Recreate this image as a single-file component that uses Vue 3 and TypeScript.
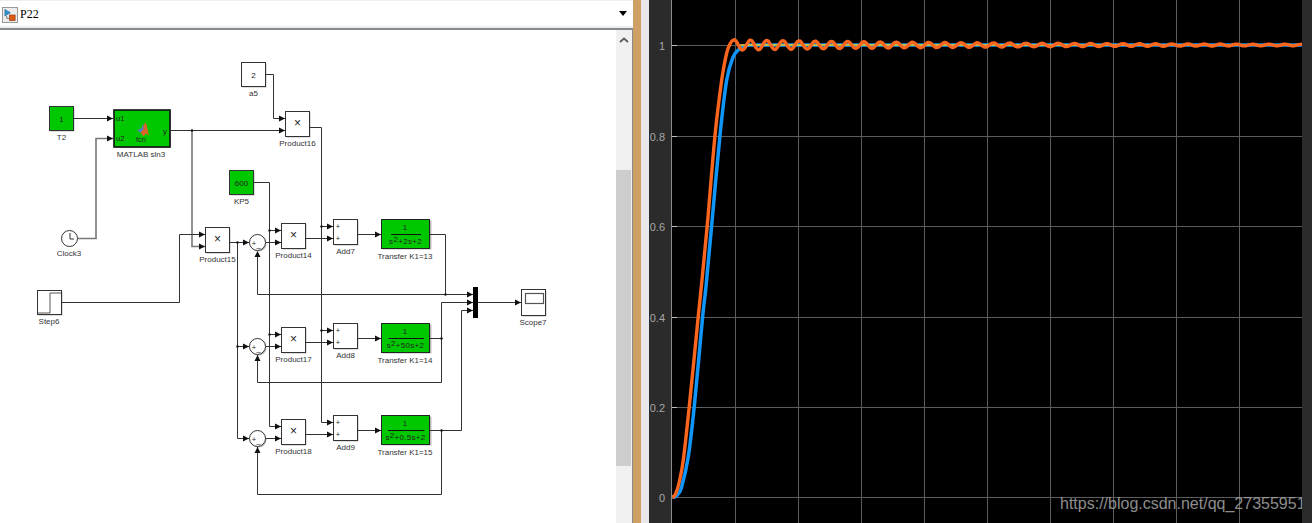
<script setup lang="ts">
type Pt = [number, number]
type Block = { x: number; y: number; w: number; h: number; green?: boolean; text?: string; label: string }

const plainBlocks: Block[] = [
  { x: 49.5, y: 106.5, w: 24, h: 24, green: true, text: '1', label: 'T2' },
  { x: 241.5, y: 62.5, w: 24, h: 24, text: '2', label: 'a5' },
  { x: 229.5, y: 170.5, w: 24, h: 24, green: true, text: '600', label: 'KP5' },
  { x: 285.5, y: 111.5, w: 24, h: 25, text: '×', label: 'Product16' },
  { x: 205.5, y: 227.5, w: 24, h: 25, text: '×', label: 'Product15' },
  { x: 281.5, y: 223.5, w: 24, h: 25, text: '×', label: 'Product14' },
  { x: 281.5, y: 327.5, w: 24, h: 25, text: '×', label: 'Product17' },
  { x: 281.5, y: 419.5, w: 24, h: 25, text: '×', label: 'Product18' },
  { x: 333.5, y: 219.5, w: 24, h: 25, label: 'Add7' },
  { x: 333.5, y: 323.5, w: 24, h: 25, label: 'Add8' },
  { x: 333.5, y: 415.5, w: 24, h: 25, label: 'Add9' },
]

const transfers = [
  { y: 219.5, den: '+2s+2', x1: 391, x2: 421, label: 'Transfer K1=13' },
  { y: 323.5, den: '+50s+2', x1: 388.5, x2: 424, label: 'Transfer K1=14' },
  { y: 415.5, den: '+0.5s+2', x1: 388, x2: 424.5, label: 'Transfer K1=15' },
]

const sums = [242.5, 346.5, 438.5]

const wires = [
  'M74 118.5H113',
  'M170 130.5H285',
  'M266 74.5H273.5V118.5H285',
  'M62 302.5H179.5V234.5H205',
  'M230 242.5H249',
  'M237.5 242.5V438.5H249',
  'M237.5 346.5H249',
  'M266 242.5H281',
  'M266 346.5H281',
  'M266 438.5H281',
  'M254 182.5H269.5V426.5H281',
  'M269.5 230.5H281',
  'M269.5 334.5H281',
  'M310 127.5H321.5V422.5H333',
  'M321.5 226.5H333',
  'M321.5 330.5H333',
  'M306 238.5H333',
  'M306 342.5H333',
  'M306 434.5H333',
  'M358 234.5H381',
  'M358 338.5H381',
  'M358 430.5H381',
  'M430 234.5H445.5V294.5',
  'M257.5 257V294.5H473',
  'M430 338.5H441.5',
  'M441.5 382.5V302.5H473',
  'M441.5 382.5H257.5V355',
  'M430 430.5H461.5V310.5H473',
  'M441.5 430.5V494.5H257.5V447',
  'M478 302.5H521',
]

const softWires = ['M78 238.5H96V138.5H113', 'M192 130.5V246.5H205']

const dots: Pt[] = [
  [192, 130.5], [237.5, 242.5], [237.5, 346.5], [269.5, 230.5], [269.5, 334.5],
  [321.5, 226.5], [321.5, 330.5], [445.5, 294.5], [441.5, 338.5], [441.5, 430.5],
]

const arrowsRight: Pt[] = [
  [113, 118.5], [113, 138.5], [285, 118.5], [285, 130.5], [205, 234.5], [205, 246.5],
  [249, 242.5], [249, 346.5], [249, 438.5], [281, 230.5], [281, 242.5], [281, 334.5],
  [281, 346.5], [281, 426.5], [281, 438.5], [333, 226.5], [333, 238.5], [333, 330.5],
  [333, 342.5], [333, 422.5], [333, 434.5], [381, 234.5], [381, 338.5], [381, 430.5],
  [473, 294.5], [473, 302.5], [473, 310.5], [521, 302.5],
]
const arrowsUp: Pt[] = [[257.5, 251], [257.5, 355], [257.5, 447]]

const rightTriangle = ([x, y]: Pt) => `${x - 6},${y - 3} ${x},${y} ${x - 6},${y + 3}`
const upTriangle = ([x, y]: Pt) => `${x},${y} ${x + 3},${y + 6} ${x - 3},${y + 6}`

const vGrid = [735, 798, 861, 924, 987, 1050, 1113, 1176, 1239]
const hGrid = [
  { y: 45, t: '1' },
  { y: 136, t: '0.8' },
  { y: 226, t: '0.6' },
  { y: 317, t: '0.4' },
  { y: 407, t: '0.2' },
  { y: 497, t: '0' },
]

function smooth(points: Pt[]): string {
  let d = `M${points[0][0]} ${points[0][1]}`
  for (let i = 0; i < points.length - 1; i++) {
    const p0 = points[Math.max(i - 1, 0)]
    const p1 = points[i]
    const p2 = points[i + 1]
    const p3 = points[Math.min(i + 2, points.length - 1)]
    const c1x = p1[0] + (p2[0] - p0[0]) / 6
    const c1y = p1[1] + (p2[1] - p0[1]) / 6
    const c2x = p2[0] - (p3[0] - p1[0]) / 6
    const c2y = p2[1] - (p3[1] - p1[1]) / 6
    d += `C${c1x.toFixed(1)} ${c1y.toFixed(1)} ${c2x.toFixed(1)} ${c2y.toFixed(1)} ${p2[0].toFixed(1)} ${p2[1].toFixed(1)}`
  }
  return d
}

const ripple: Pt[] = []
for (let x = 734; x <= 1302; x += 2) {
  const amp = 5.2 * Math.exp(-(x - 734) / 288)
  ripple.push([x, 45 - amp * Math.cos((2 * Math.PI * (x - 734.3)) / 16.2)])
}

const orangePath = smooth([
  [672, 497], [673.5, 496.7], [676, 493], [679, 483], [683.3, 460], [689.3, 406], [698.3, 316],
  [701.5, 285], [707.3, 225], [715, 135.3], [721.7, 80], [726.7, 53], [730.5, 43], ...ripple,
])

const blueTail: Pt[] = [[760, 45], [800, 45], [1302, 45]]
const bluePath = smooth([
  [672, 497], [675, 497], [678, 494], [681.7, 486.7], [688.3, 456.7], [694.3, 406], [702.7, 316],
  [706, 286.7], [711.7, 225], [720, 135.3], [726.7, 80], [733.3, 56.7], [738.3, 50], [743.3, 46.3],
  [750, 45], ...blueTail,
])
</script>

<template>
  <div class="screen">
    <div class="editor">
      <div class="titlebar">
        <div class="model-icon">
          <svg width="14" height="14" viewBox="0 0 15 15">
            <path d="M2 1.5 8 5 2 8.5Z" fill="#2f8fd0" stroke="#1b5f90" stroke-width=".6" />
            <path d="M4 8.5V11H7" fill="none" stroke="#555" stroke-width=".8" />
            <rect x="7" y="7.5" width="6" height="6" fill="#e05a10" stroke="#8a3a10" stroke-width=".7" />
          </svg>
        </div>
        <span class="model-name">P22</span>
        <span class="dropdown"></span>
      </div>
      <div class="editor-body">
        <svg class="diagram" width="616" height="493" viewBox="0 30 616 493">
          <g v-for="b in plainBlocks" :key="b.label">
            <rect :x="b.x + 1" :y="b.y + 1" :width="b.w" :height="b.h" fill="#bbb" />
            <rect :x="b.x" :y="b.y" :width="b.w" :height="b.h" :fill="b.green ? '#00c800' : '#fff'" stroke="#333" />
            <text v-if="b.text" :x="b.x + b.w / 2" :y="b.y + b.h / 2 + 3" :class="['t', 'center', { times: b.text === '×' }]">{{ b.text }}</text>
            <text :x="b.x + b.w / 2" :y="b.y + b.h + 9" class="t center label">{{ b.label }}</text>
          </g>

          <!-- matlab function -->
          <rect x="115" y="110" width="56" height="38" fill="#bbb" />
          <rect x="114" y="110" width="56" height="37" fill="#00c800" stroke="#111" stroke-width="1.6" />
          <text x="116" y="121" class="t small">u1</text>
          <text x="116" y="141" class="t small">u2</text>
          <text x="163" y="134" class="t small">y</text>
          <text x="141" y="142" class="t center small">fcn</text>
          <path d="M137 130.5 141.5 128 146 122 149 135.5 146 133.5 143.5 136.5 140.5 132.5Z" fill="#d9642a" />
          <path d="M137 130.5 141.5 128 143 124 143.5 129 140.5 132.5Z" fill="#3f86c5" />
          <text x="141" y="157" class="t center label">MATLAB sln3</text>

          <!-- clock -->
          <circle cx="69.5" cy="238.5" r="8" fill="#fff" stroke="#333" />
          <path d="M70 233V239H74" fill="none" stroke="#333" />
          <text x="69" y="256" class="t center label">Clock3</text>

          <!-- step -->
          <rect x="38.5" y="291.5" width="24" height="24" fill="#bbb" />
          <rect x="37.5" y="290.5" width="24" height="24" fill="#fff" stroke="#333" />
          <path d="M38 313H50V293H61" fill="none" stroke="#555" />
          <text x="49" y="324" class="t center label">Step6</text>

          <!-- sums -->
          <g v-for="y in sums" :key="y">
            <circle :cx="258.5" :cy="y + 1" r="8" fill="#bbb" />
            <circle cx="257.5" :cy="y" r="8" fill="#fff" stroke="#333" />
            <text x="254" :y="y + 3" class="t center small">+</text>
            <text x="258.5" :y="y + 4" class="t center small">_</text>
          </g>

          <!-- add signs -->
          <g v-for="y in [226.5, 238.5, 330.5, 342.5, 422.5, 434.5]" :key="'p' + y">
            <text x="338" :y="y + 2.5" class="t center small">+</text>
          </g>

          <!-- transfer functions -->
          <g v-for="tf in transfers" :key="tf.label">
            <rect x="382.5" :y="tf.y + 1" width="49" height="29" fill="#bbb" />
            <rect x="381.5" :y="tf.y" width="48" height="29" fill="#00c800" stroke="#222" />
            <text x="405" :y="tf.y + 10.5" class="t center">1</text>
            <line :x1="tf.x1" :x2="tf.x2" :y1="tf.y + 15" :y2="tf.y + 15" stroke="#111" />
            <text x="405.5" :y="tf.y + 24.5" class="t center den">s<tspan dy="-2">2</tspan><tspan dy="2">{{ tf.den }}</tspan></text>
            <text x="405" :y="tf.y + 39.5" class="t center label">{{ tf.label }}</text>
          </g>

          <!-- mux and scope -->
          <rect x="473" y="287" width="5" height="31" fill="#000" />
          <rect x="522.5" y="290.5" width="24" height="26" fill="#bbb" />
          <rect x="521.5" y="289.5" width="24" height="26" fill="#fff" stroke="#333" />
          <rect x="525.5" y="293.5" width="18" height="10" fill="#fff" stroke="#555" stroke-width="1.2" />
          <text x="533" y="325" class="t center label">Scope7</text>

          <path v-for="d in softWires" :key="d" :d="d" class="wire soft" />
          <path v-for="d in wires" :key="d" :d="d" class="wire" />
          <circle v-for="p in dots" :key="p.join()" :cx="p[0]" :cy="p[1]" r="1.2" fill="#111" />
          <polygon v-for="p in arrowsRight" :key="p.join()" :points="rightTriangle(p)" fill="#111" />
          <polygon v-for="p in arrowsUp" :key="p.join()" :points="upTriangle(p)" fill="#111" />
        </svg>
        <div class="scrollbar">
          <svg class="scroll-up" width="16" height="16" viewBox="0 0 16 16">
            <path d="M4 11 8 7.5 12 11" fill="none" stroke="#606060" stroke-width="2" />
          </svg>
          <div class="scroll-thumb"></div>
        </div>
      </div>
    </div>
    <div class="divider"></div>
    <div class="gutter"></div>
    <svg class="scope" width="663" height="523" viewBox="649 0 663 523">
      <defs>
        <clipPath id="plot-clip"><rect x="672" y="0" width="630" height="523" /></clipPath>
      </defs>
      <rect x="672" y="0" width="630" height="523" fill="#000" />
      <line x1="671.5" x2="671.5" y1="0" y2="523" stroke="#8c8c8c" />
      <line v-for="x in vGrid" :key="x" :x1="x + 0.5" :x2="x + 0.5" y1="0" y2="523" class="grid" />
      <g v-for="g in hGrid" :key="g.y">
        <line x1="672" x2="1302" :y1="g.y + 0.5" :y2="g.y + 0.5" class="grid" />
        <line x1="672" x2="677" :y1="g.y + 0.5" :y2="g.y + 0.5" stroke="#bbb" />
        <text x="665" :y="g.y + 5" class="tick">{{ g.t }}</text>
      </g>
      <g clip-path="url(#plot-clip)" fill="none">
        <path :d="bluePath" stroke="#0f96f8" stroke-width="3.5" />
        <line x1="738" x2="1302" y1="45" y2="45" stroke="#f0d020" stroke-width="1.4" />
        <path :d="orangePath" stroke="#fa661e" stroke-width="3.4" />
        <text x="1060" y="509" class="watermark">https://blog.csdn.net/qq_27355951</text>
      </g>
    </svg>
  </div>
</template>

<style scoped>
.screen {
  display: flex;
  width: 1312px;
  height: 523px;
  overflow: hidden;
  background: #2b2b2b;
}

.editor {
  display: flex;
  flex-direction: column;
  width: 633px;
  flex: none;
  background: #fff;
}

.titlebar {
  display: flex;
  align-items: center;
  gap: 2px;
  box-sizing: border-box;
  height: 30px;
  padding: 0 5px 0 2px;
  border-top: 1px solid #eee;
  border-bottom: 2px solid #858a8e;
  background: #fff;
  box-shadow: inset 0 -2px 0 #eee;
}

.model-icon {
  box-sizing: border-box;
  display: flex;
  width: 16px;
  height: 16px;
  border: 1px solid #999;
  background: #ececec;
}

.model-name {
  font-family: "Liberation Serif", serif;
  font-size: 12px;
  color: #000;
}

.dropdown {
  margin-left: auto;
  margin-right: 1px;
  margin-top: -3px;
  border-left: 4.5px solid transparent;
  border-right: 4.5px solid transparent;
  border-top: 5px solid #000;
}

.editor-body {
  display: flex;
  flex: 1;
  min-height: 0;
  box-sizing: border-box;
  border-right: 1px solid #8a8a8a;
}

.diagram {
  display: block;
  flex: none;
}

.scrollbar {
  display: flex;
  flex-direction: column;
  width: 16px;
  flex: none;
  background: #f0f0f0;
}

.scroll-up {
  display: block;
  margin-top: 1px;
}

.scroll-thumb {
  width: 15px;
  height: 296px;
  margin-top: 123px;
  background: #cdcdcd;
}

.divider {
  width: 8px;
  flex: none;
  background: #cfa066;
}

.gutter {
  width: 8px;
  flex: none;
  background: #e9e9e9;
}

.scope {
  display: block;
  flex: none;
}

.t {
  font-family: "Liberation Sans", Arial, sans-serif;
  font-size: 8px;
  fill: #222;
}

.center {
  text-anchor: middle;
}

.label {
  fill: #333;
}

.small {
  font-size: 7.5px;
}

.times {
  font-size: 12px;
}

.den {
  letter-spacing: 0.3px;
}

.wire {
  fill: none;
  stroke: #333;
  stroke-width: 1;
}

.soft {
  stroke: #777;
  stroke-width: 1.6;
}

.grid {
  stroke: #5c5c5c;
  stroke-width: 1;
}

.tick {
  font-family: "Liberation Sans", Arial, sans-serif;
  font-size: 11px;
  text-anchor: end;
  fill: #a8a8a8;
}

.watermark {
  font-family: "Liberation Sans", Arial, sans-serif;
  font-size: 16px;
  fill: #a5a5a5;
  opacity: 0.85;
}
</style>
